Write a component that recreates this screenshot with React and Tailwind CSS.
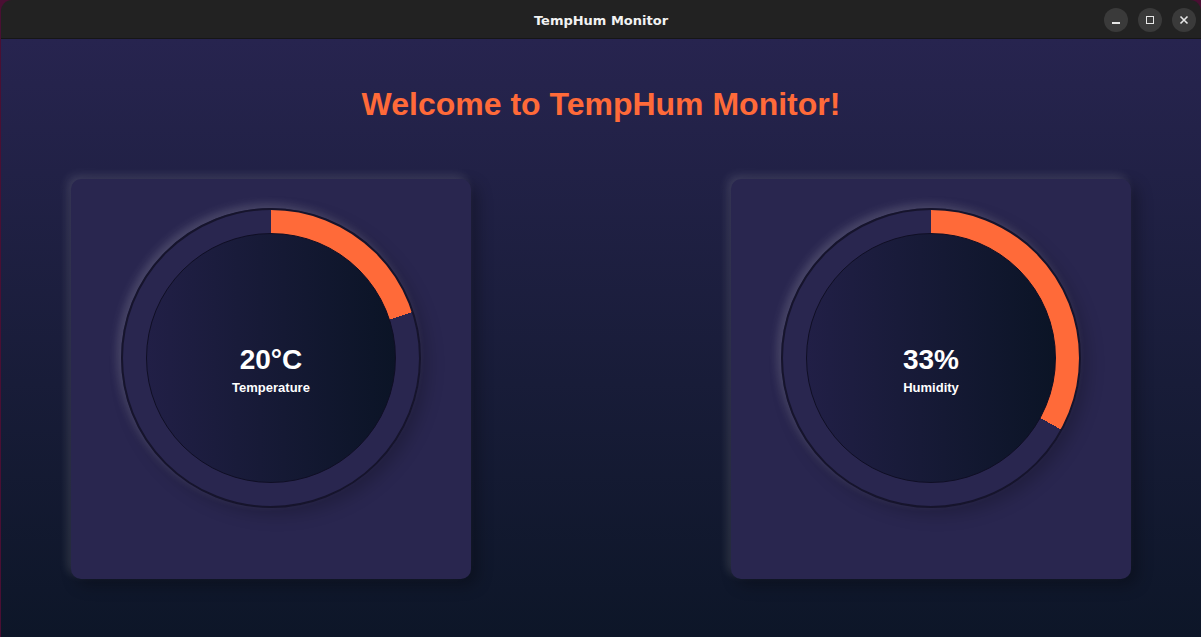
import React from 'react'

function Gauge({ percent, value, label }) {
  return (
    <div className="w-[400px] h-[400px] rounded-[10px] bg-[#29264f] shadow-[-4px_-4px_10px_rgba(255,255,255,0.12),6px_6px_16px_rgba(0,0,0,0.3)] flex justify-center pt-[29px]">
      <div
        className="w-[300px] h-[300px] rounded-full border-2 border-[#16142c] flex items-center justify-center shadow-[-4px_-4px_10px_rgba(255,255,255,0.16),6px_6px_18px_rgba(0,0,0,0.22)]"
        style={{ background: `conic-gradient(#ff6a39 0 ${percent}%, #29264f ${percent}% 100%)` }}
      >
        <div className="w-[250px] h-[250px] rounded-full border border-[#0f0e24] bg-gradient-to-r from-[#211f46] to-[#0b1426] flex flex-col items-center justify-center pt-[22px]">
          <span className="text-[28px] leading-[32px] font-bold text-white">{value}</span>
          <span className="mt-[4px] text-[13px] leading-[15px] font-bold text-white">{label}</span>
        </div>
      </div>
    </div>
  )
}

export default function App() {
  return (
    <div className="w-[1201px] h-[637px] bg-[#4a0f33] pl-px overflow-hidden font-['Liberation_Sans',Arial,sans-serif]">
      <div className="h-full rounded-t-[11px] overflow-hidden flex flex-col">
        <div className="h-[39px] shrink-0 bg-[#222222] border-b border-[#161616] flex items-center relative">
          <span className="w-full text-center text-[13px] font-bold text-[#f2f2f2] pt-[3px] font-['DejaVu_Sans',sans-serif]">TempHum Monitor</span>
          <div className="absolute right-[5px] top-[8px] flex gap-[10px]">
            <div className="w-6 h-6 rounded-full bg-[#3a3a3a] flex items-center justify-center">
              <div className="w-[8px] h-[2px] bg-[#e6e6e6] mt-[6px]" />
            </div>
            <div className="w-6 h-6 rounded-full bg-[#3a3a3a] flex items-center justify-center">
              <div className="w-[8px] h-[8px] border-[1.5px] border-[#e6e6e6]" />
            </div>
            <div className="w-6 h-6 rounded-full bg-[#3a3a3a] flex items-center justify-center">
              <svg width="10" height="10" viewBox="0 0 10 10">
                <path d="M1.5 1.5 L8.5 8.5 M8.5 1.5 L1.5 8.5" stroke="#e6e6e6" strokeWidth="1.6" />
              </svg>
            </div>
          </div>
        </div>
        <div className="flex-1 bg-gradient-to-b from-[#27244f] to-[#0d1628] flex flex-col items-center">
          <h1 className="mt-[47px] text-[32px] leading-[37px] font-bold text-[#ff6a39]">Welcome to TempHum Monitor!</h1>
          <div className="mt-[56px] w-full px-[70px] flex justify-between">
            <Gauge percent={20} value="20°C" label="Temperature" />
            <Gauge percent={33} value="33%" label="Humidity" />
          </div>
        </div>
      </div>
    </div>
  )
}
